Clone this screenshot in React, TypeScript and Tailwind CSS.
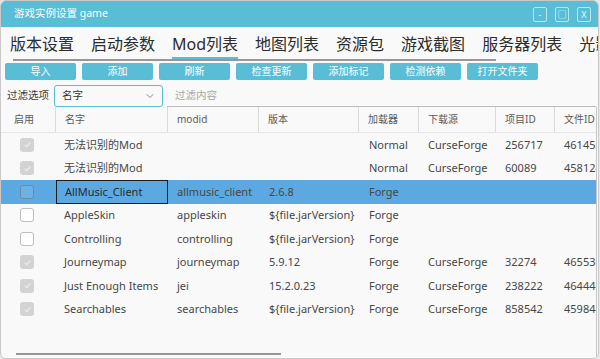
import { ChevronDown } from "lucide-react"

const tabs = ["版本设置", "启动参数", "Mod列表", "地图列表", "资源包", "游戏截图", "服务器列表", "光影"]
const actions = ["导入", "添加", "刷新", "检查更新", "添加标记", "检测依赖", "打开文件夹"]
const headers = ["启用", "名字", "modid", "版本", "加载器", "下载源", "项目ID", "文件ID"]

type Row = { checked: boolean; name: string; modid: string; version: string; loader: string; source: string; pid: string; fid: string }

const rows: Row[] = [
  { checked: true, name: "无法识别的Mod", modid: "", version: "", loader: "Normal", source: "CurseForge", pid: "256717", fid: "4614556" },
  { checked: true, name: "无法识别的Mod", modid: "", version: "", loader: "Normal", source: "CurseForge", pid: "60089", fid: "4581243" },
  { checked: false, name: "AllMusic_Client", modid: "allmusic_client", version: "2.6.8", loader: "Forge", source: "", pid: "", fid: "" },
  { checked: false, name: "AppleSkin", modid: "appleskin", version: "${file.jarVersion}", loader: "Forge", source: "", pid: "", fid: "" },
  { checked: false, name: "Controlling", modid: "controlling", version: "${file.jarVersion}", loader: "Forge", source: "", pid: "", fid: "" },
  { checked: true, name: "Journeymap", modid: "journeymap", version: "5.9.12", loader: "Forge", source: "CurseForge", pid: "32274", fid: "4655360" },
  { checked: true, name: "Just Enough Items", modid: "jei", version: "15.2.0.23", loader: "Forge", source: "CurseForge", pid: "238222", fid: "4644453" },
  { checked: true, name: "Searchables", modid: "searchables", version: "${file.jarVersion}", loader: "Forge", source: "CurseForge", pid: "858542", fid: "4598443" },
]

const cols = "grid grid-cols-[55px_112px_91px_100px_60px_77px_59px_80px]"

function Check({ checked, selected }: { checked: boolean; selected?: boolean }) {
  if (checked) {
    return (
      <div className="w-[14px] h-[14px] rounded-[3px] bg-[#d3d3d3] flex items-center justify-center">
        <svg width="9" height="9" viewBox="0 0 10 10" fill="none" stroke="#eeeeee" strokeWidth="1.2">
          <path d="M2 5.2 4.2 7.4 8.2 2.6" />
        </svg>
      </div>
    )
  }
  return <div className={`w-[14px] h-[14px] rounded-[3px] border ${selected ? "border-[#6f8aa0] bg-[#6cb2e4]" : "border-[#bdbdbd] bg-white"}`} />
}

export default function App() {
  return (
    <div className="w-[600px] h-[359px] bg-[#e9e9e9] overflow-hidden" style={{ fontFamily: '"Noto Sans", "Noto Sans CJK SC", sans-serif' }}>
      <div className="w-[599px] h-[359px] bg-[#f9f9f9] border border-[#c9c9c9] rounded-[6px] overflow-hidden flex flex-col">
        {/* title bar */}
        <div className="h-[26px] shrink-0 bg-[#58bdd5] flex items-center pl-[13px] pr-[7px]">
          <span className="text-[10.5px] text-white">游戏实例设置 game</span>
          <div className="ml-auto flex gap-[8px]">
            {["-", "□", "X"].map((b) => (
              <div key={b} className="w-[14px] h-[15px] border border-white/60 rounded-[2px] flex items-center justify-center text-[9px] text-white/90 leading-none">{b}</div>
            ))}
          </div>
        </div>

        {/* tabs */}
        <div className="h-[36px] shrink-0 relative">
          <div className="flex gap-[17px] pl-[9px] pt-[3px] whitespace-nowrap">
            {tabs.map((t) => (
              <div key={t} className="relative h-[28px] flex items-center text-[16px] text-[#2c2c2c]">
                {t}
                {t === "Mod列表" && <div className="absolute left-0 right-0 bottom-[-1px] h-[2px] bg-[#58bdd5]" />}
              </div>
            ))}
          </div>
          <div className="absolute left-[12px] top-[32px] w-[483px] h-[2px] bg-[#979797]" />
        </div>

        {/* actions */}
        <div className="flex gap-[6px] pl-[4px] shrink-0">
          {actions.map((a) => (
            <div key={a} className="w-[71px] h-[17px] rounded-[2px] bg-[#58bdd5] text-white text-[10px] flex items-center justify-center">{a}</div>
          ))}
        </div>

        {/* filter */}
        <div className="flex items-center mt-[5px] h-[22px] shrink-0">
          <span className="text-[10.5px] text-[#3a3a3a] w-[53px] pl-[6px]">过滤选项</span>
          <div className="w-[109px] h-[22px] border border-[#58bdd5] rounded-[3px] bg-[#f9f9f9] flex items-center pl-[7px] pr-[6px] text-[10.5px] text-[#333]">
            名字
            <ChevronDown className="ml-auto w-[12px] h-[12px] text-[#666]" strokeWidth={1.5} />
          </div>
          <div className="ml-[4px] w-[429px] h-[22px] border-b border-[#bcbcbc] flex items-center pl-[8px] text-[10.5px] text-[#a8a8a8]">过滤内容</div>
        </div>

        {/* table */}
        <div className="w-[596px] flex-1 border-r border-[#c6c6c6] overflow-hidden relative text-[#474747]">
          <div className={`${cols} h-[26px] text-[10px] text-[#5a5a5a] border-b border-[#e6e6e6]`}>
            {headers.map((h, i) => (
              <div key={h} className={`flex items-center ${i === 0 ? "pl-[13px]" : "pl-[9px]"} ${i < 7 ? "border-r border-[#dcdcdc]" : ""}`}>{h}</div>
            ))}
          </div>
          {rows.map((r, i) => {
            const sel = i === 2
            return (
              <div key={i} className={`${cols} h-[23.5px] text-[11px] ${sel ? "bg-[#5ca9e1]" : ""}`}>
                <div className="flex items-center pl-[19px]"><Check checked={r.checked} selected={sel} /></div>
                <div className={`flex items-center pl-[8px] whitespace-nowrap ${sel ? "border-[1.5px] border-[#1a1a1a] text-[#2a2a2a]" : ""}`}>{r.name}</div>
                <div className="flex items-center pl-[9px] whitespace-nowrap">{r.modid}</div>
                <div className="flex items-center pl-[10px] whitespace-nowrap">{r.version}</div>
                <div className="flex items-center pl-[10px]">{r.loader}</div>
                <div className="flex items-center pl-[9px]">{r.source}</div>
                <div className="flex items-center pl-[9px]">{r.pid}</div>
                <div className="flex items-center pl-[9px] whitespace-nowrap">{r.fid}</div>
              </div>
            )
          })}
          <div className="absolute left-[15px] bottom-[3px] w-[265px] h-[2px] bg-[#979797]" />
        </div>
      </div>
    </div>
  )
}
